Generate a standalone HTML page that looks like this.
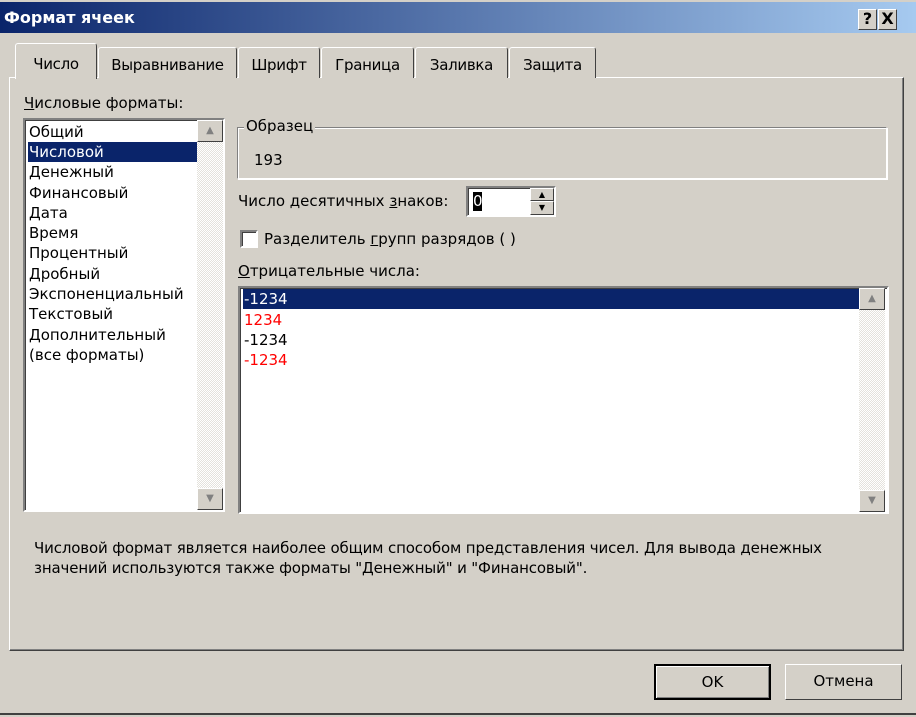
<!DOCTYPE html>
<html><head><meta charset="utf-8"><style>
*{margin:0;padding:0;box-sizing:border-box}
body{width:916px;height:717px;background:#d4d0c8;font-family:Tahoma,"DejaVu Sans","Liberation Sans",sans-serif;font-size:15px;color:#000;position:relative;overflow:hidden}
.a{position:absolute}
.title{left:0;top:2px;width:916px;height:31px;background:linear-gradient(90deg,#0a246a,#a6caf0);color:#fff;font-weight:bold;font-size:16px;padding:6px 0 0 4px}
.tb{top:9px;width:19px;height:21px;background:#d4d0c8;border:1px solid;border-color:#fff #404040 #404040 #fff;color:#000;font-weight:bold;font-size:16px;text-align:center;line-height:18px}
.panel{left:9px;top:77px;width:895px;height:574px;border:1px solid;border-color:#fff #404040 #404040 #fff;box-shadow:inset -1px -1px #808080}
.tab{top:47px;height:31px;border:1px solid;border-bottom:none;border-color:#fff #404040 #fff #fff;border-radius:3px 3px 0 0;text-align:center;padding-top:8px;background:#d4d0c8;letter-spacing:-0.3px}
.sunk{border:2px solid;border-color:#808080 #fff #fff #808080;box-shadow:inset 1px 1px #404040;background:#fff}
.li{position:absolute;left:3px;height:20px;line-height:20px;padding-left:1px}
.sb{position:absolute;width:26px;background:repeating-conic-gradient(#fff 0 25%,#e4e2dc 0 50%) 0 0/2px 2px}
.btn{position:absolute;width:26px;height:22px;background:#d4d0c8;border:1px solid;border-color:#fff #404040 #404040 #fff;color:#808080;font-size:10px;text-align:center;line-height:20px}
.pb{top:664px;width:117px;height:36px;border:1px solid;border-color:#fff #404040 #404040 #fff;text-align:center;line-height:33px}
</style></head><body>
<div class="a title">Формат ячеек</div>
<div class="a tb" style="left:858px">?</div>
<div class="a tb" style="left:878px">X</div>
<div class="a panel"></div>
<div class="a tab" style="left:15px;top:43px;width:82px;height:36px;padding-top:11px;z-index:2">Число</div>
<div class="a tab" style="left:98px;width:139px">Выравнивание</div>
<div class="a tab" style="left:238px;width:82px">Шрифт</div>
<div class="a tab" style="left:321px;width:93px">Граница</div>
<div class="a tab" style="left:415px;width:93px">Заливка</div>
<div class="a tab" style="left:509px;width:87px">Защита</div>
<div class="a" style="left:24px;top:94px"><u>Ч</u>исловые форматы:</div>
<div class="a sunk" style="left:23px;top:118px;width:202px;height:394px">
<div class="li" style="top:2px">Общий</div>
<div class="li" style="top:22px;width:170px;background:#0a246a;color:#fff">Числовой</div>
<div class="li" style="top:42px">Денежный</div>
<div class="li" style="top:63px">Финансовый</div>
<div class="li" style="top:83px">Дата</div>
<div class="li" style="top:103px">Время</div>
<div class="li" style="top:123px">Процентный</div>
<div class="li" style="top:144px">Дробный</div>
<div class="li" style="top:164px">Экспоненциальный</div>
<div class="li" style="top:184px">Текстовый</div>
<div class="li" style="top:205px">Дополнительный</div>
<div class="li" style="top:225px">(все форматы)</div>
<div class="sb" style="left:172px;top:0;height:390px"><div class="btn" style="top:0">▲</div><div class="btn" style="bottom:0">▼</div></div>
</div>
<div class="a" style="left:237px;top:127px;width:650px;height:52px;border:1px solid;border-color:#808080 #fff #fff #808080;box-shadow:1px 1px #fff,inset 1px 1px #fff"></div>
<div class="a" style="left:244px;top:117px;background:#d4d0c8;padding:0 2px">Образец</div>
<div class="a" style="left:254px;top:151px">193</div>
<div class="a" style="left:238px;top:192px">Число десятичных <u>з</u>наков:</div>
<div class="a sunk" style="left:466px;top:186px;width:90px;height:31px">
<div class="a" style="left:5px;top:4px;background:#000;color:#fff;line-height:19px;width:9px">0</div>
<div class="btn" style="right:0;top:0;height:13px;width:24px;line-height:11px;color:#000;font-size:8px">▲</div>
<div class="btn" style="right:0;top:13px;height:14px;width:24px;line-height:12px;color:#000;font-size:8px">▼</div>
</div>
<div class="a sunk" style="left:240px;top:230px;width:18px;height:18px"></div>
<div class="a" style="left:264px;top:230px">Разделитель <u>г</u>рупп разрядов ( )</div>
<div class="a" style="left:238px;top:262px"><u>О</u>трицательные числа:</div>
<div class="a sunk" style="left:238px;top:286px;width:651px;height:228px">
<div class="li" style="top:1px;width:617px;background:#0a246a;color:#fff">-1234</div>
<div class="li" style="top:22px;color:#f00">1234</div>
<div class="li" style="top:42px">-1234</div>
<div class="li" style="top:62px;color:#f00">-1234</div>
<div class="sb" style="left:619px;top:0;height:224px"><div class="btn" style="top:0">▲</div><div class="btn" style="bottom:0">▼</div></div>
</div>
<div class="a" style="left:34px;top:538px;line-height:20px;letter-spacing:-0.15px">Числовой формат является наиболее общим способом представления чисел. Для вывода денежных<br>значений используются также форматы "Денежный" и "Финансовый".</div>
<div class="a pb" style="left:654px;border:2px solid #000;box-shadow:inset 1px 1px #fff,inset -1px -1px #808080">OK</div>
<div class="a pb" style="left:785px">Отмена</div>
<div class="a" style="left:0;top:713px;width:916px;height:2px;background:#404040"></div>
</body></html>
